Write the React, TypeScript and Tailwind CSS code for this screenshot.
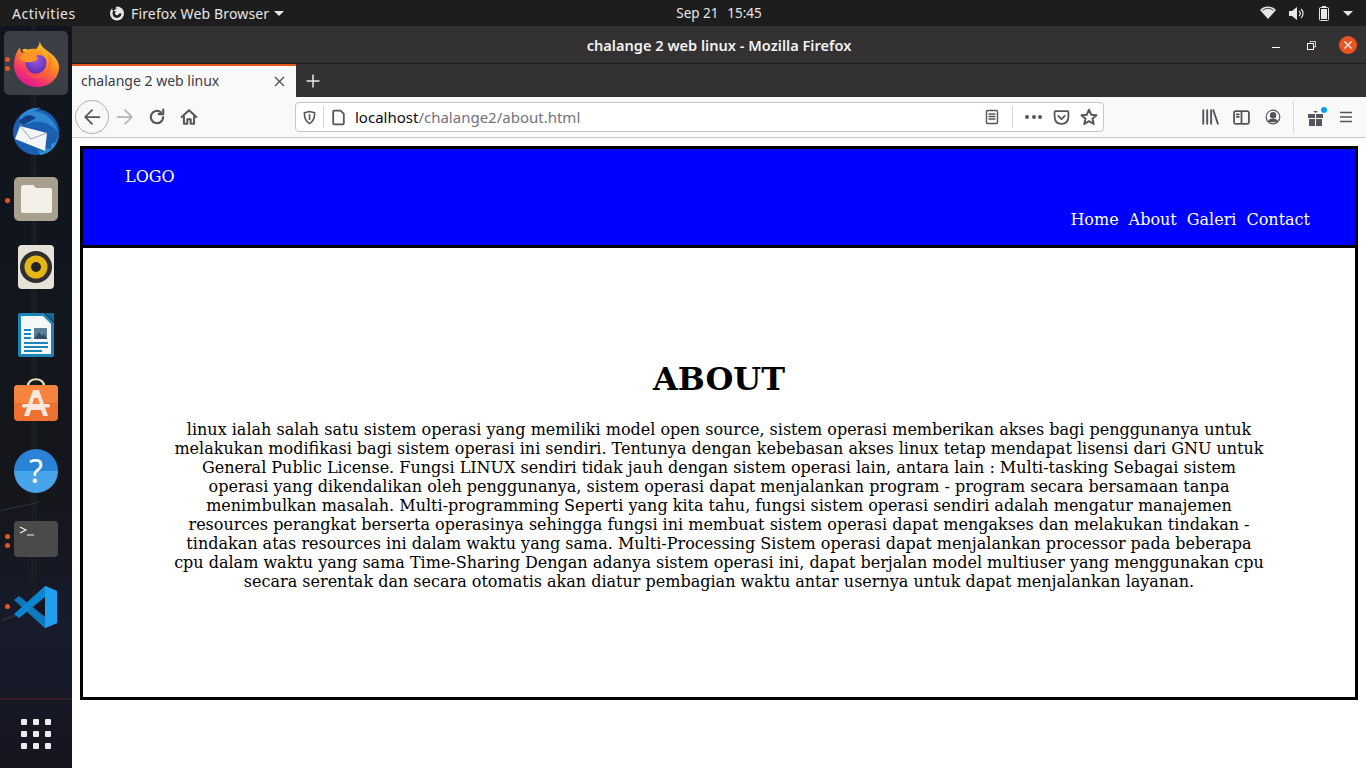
import type { ReactNode } from "react";

const uiFont = "font-['Noto_Sans','Open_Sans',sans-serif]";

const paragraph =
  "linux ialah salah satu sistem operasi yang memiliki model open source, sistem operasi memberikan akses bagi penggunanya untuk melakukan modifikasi bagi sistem operasi ini sendiri. Tentunya dengan kebebasan akses linux tetap mendapat lisensi dari GNU untuk General Public License. Fungsi LINUX sendiri tidak jauh dengan sistem operasi lain, antara lain : Multi-tasking Sebagai sistem operasi yang dikendalikan oleh penggunanya, sistem operasi dapat menjalankan program - program secara bersamaan tanpa menimbulkan masalah. Multi-programming Seperti yang kita tahu, fungsi sistem operasi sendiri adalah mengatur manajemen resources perangkat berserta operasinya sehingga fungsi ini membuat sistem operasi dapat mengakses dan melakukan tindakan - tindakan atas resources ini dalam waktu yang sama. Multi-Processing Sistem operasi dapat menjalankan processor pada beberapa cpu dalam waktu yang sama Time-Sharing Dengan adanya sistem operasi ini, dapat berjalan model multiuser yang menggunakan cpu secara serentak dan secara otomatis akan diatur pembagian waktu antar usernya untuk dapat menjalankan layanan.";

function Icon({ size = 16, children, className = "" }: { size?: number; children: ReactNode; className?: string }) {
  return (
    <svg width={size} height={size} viewBox="0 0 16 16" fill="none" stroke="#55555c" strokeWidth="1.7" strokeLinecap="round" strokeLinejoin="round" className={`shrink-0 ${className}`}>
      {children}
    </svg>
  );
}

function TopBar() {
  return (
    <div className={`${uiFont} flex h-[26px] shrink-0 items-center bg-[#1d1d1d] text-[14px] text-[#e6e6e6]`}>
      <span className="ml-3 w-[97px] tracking-[0.55px]">Activities</span>
      <svg width="16" height="16" viewBox="0 0 16 16">
        <circle cx="8" cy="8.5" r="7" fill="#e6e6e6" />
        <path d="M4 1 L8 0 L6.5 3.5 L9 4 A4.5 4.5 0 1 0 12.5 8.5 L10 8.5 A2 2 0 1 1 7 6.5 L3 5 Z" fill="#1d1d1d" />
      </svg>
      <span className="ml-[6px] tracking-[0.15px]">Firefox Web Browser</span>
      <span className="ml-[5px] h-0 w-0 border-x-[5px] border-t-[5px] border-x-transparent border-t-[#e6e6e6]" />
      <span className="ml-[392px] w-[51px] text-[13.5px]">Sep 21</span>
      <span className="text-[13.5px]">15:45</span>
      <div className="ml-auto flex items-center">
        <svg width="16" height="14" viewBox="0 0 16 14" className="mr-[13px]">
          <path d="M0 4 A11 11 0 0 1 16 4 L8 13 Z" fill="#e6e6e6" />
          <path d="M2.5 4.5 A8 8 0 0 1 13.5 4.5" stroke="#1d1d1d" strokeWidth="0.8" fill="none" />
        </svg>
        <svg width="15" height="13" viewBox="0 0 15 13" className="mr-[15px]">
          <path d="M0 4 H3 L8 0 V13 L3 9 H0 Z" fill="#e6e6e6" />
          <path d="M10 4 A3 3 0 0 1 10 9 M12 2 A6 6 0 0 1 12 11" stroke="#e6e6e6" strokeWidth="1.2" fill="none" />
        </svg>
        <svg width="10" height="15" viewBox="0 0 10 15" className="mr-[14px]">
          <rect x="3" y="0" width="4" height="2" fill="#e6e6e6" />
          <rect x="0.5" y="1.5" width="9" height="13" rx="1" fill="none" stroke="#e6e6e6" />
          <rect x="2" y="3" width="6" height="10" fill="#e6e6e6" />
        </svg>
        <span className="mr-[13px] h-0 w-0 border-x-[5px] border-t-[5px] border-x-transparent border-t-[#e6e6e6]" />
      </div>
    </div>
  );
}

function Dot({ top }: { top: number }) {
  return <span className="absolute left-[5px] h-[5px] w-[5px] rounded-full bg-[#e95420]" style={{ top }} />;
}

function Dock() {
  return (
    <div className="relative w-[72px] shrink-0 overflow-hidden bg-[linear-gradient(180deg,#10141c_0%,#11161e_30%,#15161b_62%,#171b2b_82%,#15151f_100%)]">
      {/* wallpaper bits */}
      <div className="absolute left-[31px] top-0 h-[590px] w-[6px] bg-[#191c20]" />
      <div className="absolute left-0 top-[672px] h-[2px] w-[72px] bg-[#3a1a24]" />
      <div className="absolute left-0 top-[480px] h-[1px] w-[40px] -rotate-12 bg-[#2e3138]" />
      <div className="absolute left-0 top-[585px] h-[2px] w-[50px] -rotate-[20deg] bg-[#2a2d33]" />
      <div className="absolute left-[4px] top-[5px] h-[64px] w-[64px] rounded-[5px] bg-[#3b3e44]" />
      <Dot top={31} />
      <Dot top={40} />
      <Dot top={172} />
      <Dot top={508} />
      <Dot top={517} />
      <Dot top={578} />

      {/* firefox */}
      <svg width="48" height="50" viewBox="0 0 48 50" className="absolute left-[13px] top-[12px]">
        <defs>
          <linearGradient id="ff" x1="0.8" y1="0" x2="0.25" y2="1">
            <stop offset="0" stopColor="#ffdf2b" />
            <stop offset="0.45" stopColor="#ff8a1f" />
            <stop offset="0.75" stopColor="#f5366a" />
            <stop offset="1" stopColor="#d9159a" />
          </linearGradient>
          <radialGradient id="ffglobe" cx="0.5" cy="0.35" r="0.7">
            <stop offset="0" stopColor="#9a5be0" />
            <stop offset="1" stopColor="#5b2bb5" />
          </radialGradient>
        </defs>
        <path d="M27 1 C26 6 30 10 36 14 C43 19 46 24 46 29 C46 41 36 49 24 49 C11 49 1 39 1 27 C1 20 3 14 7 9 C7 12 8 14 9 15 C13 11 18 10 23 11 C26 8 27 5 27 1 Z" fill="url(#ff)" />
        <path d="M34 14 C38 20 36 33 28 37 C24 39 17 38 13 33 C16 40 26 42 33 37 C40 31 40 20 34 14 Z" fill="#ff6a2a" opacity="0.7" />
        <circle cx="23" cy="25" r="10.5" fill="url(#ffglobe)" />
        <path d="M6 20 C9 15 14 14 18 15 C24 11 31 14 34 22 C30 17 26 16 23 18 L25 20 C24 23 20 24 18 24 C14 25 9 23 6 20 Z" fill="#ff9426" />
        <path d="M17 15 C15 11 11 9 9 13 C12 13 14 14 17 15 Z" fill="#ffbd2e" />
      </svg>

      {/* thunderbird */}
      <svg width="50" height="50" viewBox="0 0 50 50" className="absolute left-[11px] top-[80px]">
        <circle cx="25" cy="26" r="23" fill="#1b5fb0" />
        <path d="M48 27 C48 38 40 48 29 49 L27 44 L33 46 L35 42 L40 43 L40 38 L45 36 Z" fill="#2b8fd8" />
        <path d="M9 11 C14 4 22 1 30 2 C26 3 24 4 23 5 C34 6 44 14 47 26 C40 18 30 14 22 16 L9 20 Z" fill="#2f86d3" />
        <path d="M8 16 C12 9 20 7 25 12 L12 19 Z" fill="#123f86" />
        <path d="M9 20 L36 27 L34 45 L4 33 Z" fill="#f3f5f8" />
        <path d="M9 20 L20 33 L36 27" stroke="#9ba6b2" strokeWidth="1" fill="none" />
      </svg>

      {/* files */}
      <div className="absolute left-[14px] top-[151px] flex h-[44px] w-[44px] items-center justify-center rounded-[5px] bg-[#a7a08f]">
        <svg width="32" height="28" viewBox="0 0 32 28">
          <path d="M1 2 Q1 0 3 0 H13 L16 3 H30 Q32 3 32 5 V26 Q32 28 30 28 H3 Q1 28 1 26 Z" fill="#f3f0ea" />
        </svg>
      </div>

      {/* rhythmbox */}
      <div className="absolute left-[18px] top-[219px] flex h-[44px] w-[36px] items-center justify-center rounded-[4px] bg-[#e6e2d8]">
        <svg width="32" height="32" viewBox="0 0 32 32">
          <circle cx="16" cy="16" r="16" fill="#2f2f33" />
          <circle cx="16" cy="16" r="11.5" fill="#e4b715" />
          <circle cx="16" cy="16" r="5" fill="#222" />
        </svg>
      </div>

      {/* writer */}
      <svg width="36" height="44" viewBox="0 0 36 44" className="absolute left-[18px] top-[287px]">
        <path d="M2 0 H26 L36 10 V42 Q36 44 34 44 H2 Q0 44 0 42 V2 Q0 0 2 0 Z" fill="#1c85b8" />
        <path d="M3 3 H25 L33 11 V41 H3 Z" fill="#f5f7f8" />
        <path d="M27 0 H36 V9 Z" fill="#14699a" />
        <rect x="6" y="16" width="7" height="2" fill="#1c85b8" />
        <rect x="6" y="20" width="7" height="2" fill="#1c85b8" />
        <rect x="6" y="24" width="7" height="2" fill="#1c85b8" />
        <rect x="16" y="15" width="13" height="11" fill="#5b7e98" />
        <path d="M16 26 L21 19 L24 23 L26 21 L29 26 Z" fill="#2f4e63" />
        <rect x="6" y="29" width="24" height="2" fill="#1c85b8" />
        <rect x="6" y="33" width="24" height="2" fill="#1c85b8" />
        <rect x="6" y="37" width="18" height="2" fill="#1c85b8" />
      </svg>

      {/* software */}
      <svg width="44" height="46" viewBox="0 0 44 46" className="absolute left-[14px] top-[351px]">
        <path d="M14 9 C14 0 30 0 30 9" stroke="#f0dfbc" strokeWidth="2.2" fill="none" />
        <rect x="0" y="8" width="44" height="36" rx="4" fill="#ee7132" />
        <rect x="0" y="8" width="44" height="18" rx="4" fill="#f6843e" />
        <path d="M19 13 H25 L34 39 H29 L27 33 H17 L15 39 H10 Z" fill="#fbe8dc" />
        <path d="M20 21 H24 L26 28 H18 Z" fill="#f6843e" />
        <rect x="8" y="27" width="28" height="3.5" rx="1.5" fill="#fbe8dc" />
      </svg>

      {/* help */}
      <div className="absolute left-[14px] top-[423px] flex h-[44px] w-[44px] items-center justify-center rounded-full bg-[linear-gradient(180deg,#2a83d6_50%,#47a4e8_50%)] font-['Noto_Sans',sans-serif] text-[32px] leading-none text-white">
        ?
      </div>

      {/* terminal */}
      <div className="absolute left-[14px] top-[495px] h-[36px] w-[44px] rounded-[4px] bg-[#4a4a4a]">
        <svg width="44" height="36" viewBox="0 0 44 36">
          <path d="M6 6 L12 9 L6 12 M13 14 H20" stroke="#f0f0f0" strokeWidth="1.2" fill="none" />
        </svg>
      </div>

      {/* vscode */}
      <svg width="44" height="42" viewBox="0 0 44 42" className="absolute left-[14px] top-[560px]">
        <path d="M31 0 L43 5 V37 L31 42 L10 22 L31 26 Z" fill="#0a7ec9" />
        <path d="M31 0 L43 5 V37 L31 42 Z" fill="#1fa0ee" />
        <path d="M31 11 V31 L15 21 Z" fill="#14161f" />
        <path d="M5 10 L31 31 V42 L0 14 Z" fill="#0f78bd" />
        <path d="M0 28 L31 0 V11 L5 32 Z" fill="#0a86d2" />
      </svg>

      {/* app grid */}
      <div className="absolute left-[21px] top-[693px] grid grid-cols-3 gap-[6px]">
        {Array.from({ length: 9 }).map((_, i) => (
          <span key={i} className="h-[6px] w-[6px] rounded-[1px] bg-[#ececec]" />
        ))}
      </div>
    </div>
  );
}

function TitleBar() {
  return (
    <div className={`${uiFont} relative flex h-[38px] shrink-0 items-center justify-center border-b border-[#1f1f1f] bg-[#333132] pt-[2px] text-[14.6px] font-semibold text-[#f2f2f2]`}>
      <span>chalange 2 web linux - Mozilla Firefox</span>
      <div className="absolute right-[9px] top-[10px] flex items-center">
        <span className="mr-[27px] mt-[5px] h-[1px] w-[8px] bg-white" />
        <svg width="9" height="9" viewBox="0 0 9 9" className="mr-[23px]">
          <path d="M3 1.5 V0.5 H8.5 V6 H7" stroke="#fff" strokeWidth="0.8" fill="none" />
          <rect x="0.5" y="2.5" width="6" height="6" stroke="#fff" strokeWidth="1" fill="none" />
        </svg>
        <span className="flex h-[18px] w-[18px] items-center justify-center rounded-full bg-[#e95420]">
          <svg width="8" height="8" viewBox="0 0 8 8">
            <path d="M0.5 0.5 L7.5 7.5 M7.5 0.5 L0.5 7.5" stroke="#fff" strokeWidth="1.2" />
          </svg>
        </span>
      </div>
    </div>
  );
}

function TabBar() {
  return (
    <div className={`${uiFont} flex h-[33px] shrink-0 bg-[#333132]`}>
      <div className="flex w-[224px] items-center border-t-2 border-[#e95420] bg-[#f9f9fa] pb-[2px] pl-[9px] pr-[11px] text-[14px] text-[#3d3d44]">
        <span className="flex-1">chalange 2 web linux</span>
        <svg width="11" height="11" viewBox="0 0 11 11" className="mt-[2px]">
          <path d="M1 1 L10 10 M10 1 L1 10" stroke="#55555c" strokeWidth="1.4" />
        </svg>
      </div>
      <div className="ml-[10px] flex items-center">
        <svg width="14" height="14" viewBox="0 0 14 14">
          <path d="M7 0.5 V13.5 M0.5 7 H13.5" stroke="#e8e8e8" strokeWidth="1.5" />
        </svg>
      </div>
    </div>
  );
}

function ToolBar() {
  return (
    <div className={`${uiFont} flex h-[41px] shrink-0 items-center border-b border-[#c9c9cb] bg-[#f9f9fa]`}>
      <span className="ml-[3px] flex h-[34px] w-[34px] items-center justify-center rounded-full border border-[#b1b1b3]">
        <Icon size={20}>
          <path d="M14 8 H2.5 M8 2.5 L2.5 8 L8 13.5" strokeWidth="1.4" />
        </Icon>
      </span>
      <Icon size={20} className="ml-[6px]">
        <path d="M2 8 H13.5 M8 2.5 L13.5 8 L8 13.5" stroke="#b4b4b7" strokeWidth="1.4" />
      </Icon>
      <Icon size={18} className="ml-[13px]">
        <path d="M13.5 8 A5.5 5.5 0 1 1 11.5 3.8 M13.5 1.5 V5.5 H9.5" strokeWidth="1.9" />
      </Icon>
      <Icon size={18} className="ml-[14px]">
        <path d="M1.5 8 L8 2 L14.5 8 M3.5 7 V14 H6.5 V10 H9.5 V14 H12.5 V7" strokeWidth="1.8" />
      </Icon>
      <div className="ml-[97px] flex h-[30px] w-[809px] items-center rounded-[4px] border border-[#c6c6c8] bg-white text-[15px]">
        <Icon size={15} className="ml-[6px]">
          <path d="M8 1.5 L13.5 3 C13.5 9 12 12.5 8 14.5 C4 12.5 2.5 9 2.5 3 Z M8 5 V10" />
        </Icon>
        <span className="ml-[6px] h-[22px] w-[1px] bg-[#d7d7db]" />
        <Icon size={17} className="ml-[6px]">
          <path d="M3 2.5 Q3 1.5 4 1.5 H10 L13 4.5 V13.5 Q13 14.5 12 14.5 H4 Q3 14.5 3 13.5 Z" />
        </Icon>
        <span className="ml-[8px] text-[#0c0c0d]">localhost</span>
        <span className="text-[#737378]">/chalange2/about.html</span>
        <Icon size={16} className="ml-auto">
          <path d="M2.5 2.5 Q2.5 1.5 3.5 1.5 H12.5 Q13.5 1.5 13.5 2.5 V13.5 Q13.5 14.5 12.5 14.5 H3.5 Q2.5 14.5 2.5 13.5 Z M5 5 H11 M5 7.5 H11 M5 10 H11" strokeWidth="1.4" />
        </Icon>
        <span className="ml-[12px] h-[22px] w-[1px] bg-[#d7d7db]" />
        <div className="ml-[12px] flex w-[17px] justify-between">
          <span className="h-[4px] w-[4px] rounded-full bg-[#55555c]" />
          <span className="h-[4px] w-[4px] rounded-full bg-[#55555c]" />
          <span className="h-[4px] w-[4px] rounded-full bg-[#55555c]" />
        </div>
        <Icon size={17} className="ml-[11px]">
          <path d="M1.5 3 Q1.5 2 2.5 2 H13.5 Q14.5 2 14.5 3 V7 Q14.5 14 8 14 Q1.5 14 1.5 7 Z M5 6.5 L8 9.5 L11 6.5" />
        </Icon>
        <Icon size={18} className="ml-[10px] mr-[5px]">
          <path d="M8 1.5 L10 6 L14.7 6.4 L11.1 9.5 L12.2 14.2 L8 11.7 L3.8 14.2 L4.9 9.5 L1.3 6.4 L6 6 Z" />
        </Icon>
      </div>
      <Icon size={18} className="ml-[97px]">
        <path d="M2 2 V14 M5.5 2 V14 M9 2 V14 M11 2 L15 14" />
      </Icon>
      <Icon size={17} className="ml-[14px]">
        <path d="M2.5 2 H13.5 Q15 2 15 3.5 V12.5 Q15 14 13.5 14 H2.5 Q1 14 1 12.5 V3.5 Q1 2 2.5 2 Z M8 2 V14 M3.5 5 H5.5 M3.5 7.5 H5.5" />
      </Icon>
      <Icon size={16} className="ml-[15px]">
        <circle cx="8" cy="8" r="6.8" strokeWidth="1.2" />
        <circle cx="8" cy="6.3" r="2.4" fill="#55555c" />
        <path d="M3.8 12.5 C5 9.5 11 9.5 12.2 12.5 Z" fill="#55555c" />
      </Icon>
      <span className="ml-[12px] h-[32px] w-[1px] bg-[#d7d7db]" />
      <div className="relative ml-[14px] h-[18px] w-[15px]">
        <svg width="15" height="16" viewBox="0 0 15 16" className="absolute bottom-0 left-0">
          <path d="M0 4 H7 V8 H0 Z M8 4 H15 V8 H8 Z M1 9 H7 V16 H1 Z M8 9 H14 V16 H8 Z M5 1 L7.5 3 L10 1 Z" fill="#55555c" />
        </svg>
        <span className="absolute -right-[4px] -top-[1px] h-[6px] w-[6px] rounded-full bg-[#0a9dff]" />
      </div>
      <Icon size={16} className="ml-[15px]">
        <path d="M2 3.5 H14 M2 8 H14 M2 12.5 H14" strokeLinecap="butt" />
      </Icon>
    </div>
  );
}

function WebPage() {
  return (
    <div className="min-h-0 flex-1 bg-white pl-[8px] pr-[8px] pt-[8px] font-['DejaVu_Serif',serif] text-black">
      <div className="h-[554px] border-[3px] border-black">
        <header className="h-[99px] border-b-[3px] border-black bg-[#0000ff] text-[16px] text-white">
          <div className="pl-[42px] pt-[18px] leading-[19px]">LOGO</div>
          <nav className="mt-[24px] flex justify-end gap-[10px] pr-[45px] leading-[19px]">
            <span>Home</span>
            <span>About</span>
            <span>Galeri</span>
            <span>Contact</span>
          </nav>
        </header>
        <main className="px-[90px] pt-[112px] text-center">
          <h1 className="text-[32px] font-bold leading-[38px]">ABOUT</h1>
          <p className="mt-[22px] text-[16px] leading-[19px]">{paragraph}</p>
        </main>
      </div>
    </div>
  );
}

export default function App() {
  return (
    <div className="flex h-screen w-[1366px] flex-col overflow-hidden">
      <TopBar />
      <div className="flex min-h-0 flex-1">
        <Dock />
        <div className="flex min-w-0 flex-1 flex-col">
          <TitleBar />
          <TabBar />
          <ToolBar />
          <WebPage />
        </div>
      </div>
    </div>
  );
}
